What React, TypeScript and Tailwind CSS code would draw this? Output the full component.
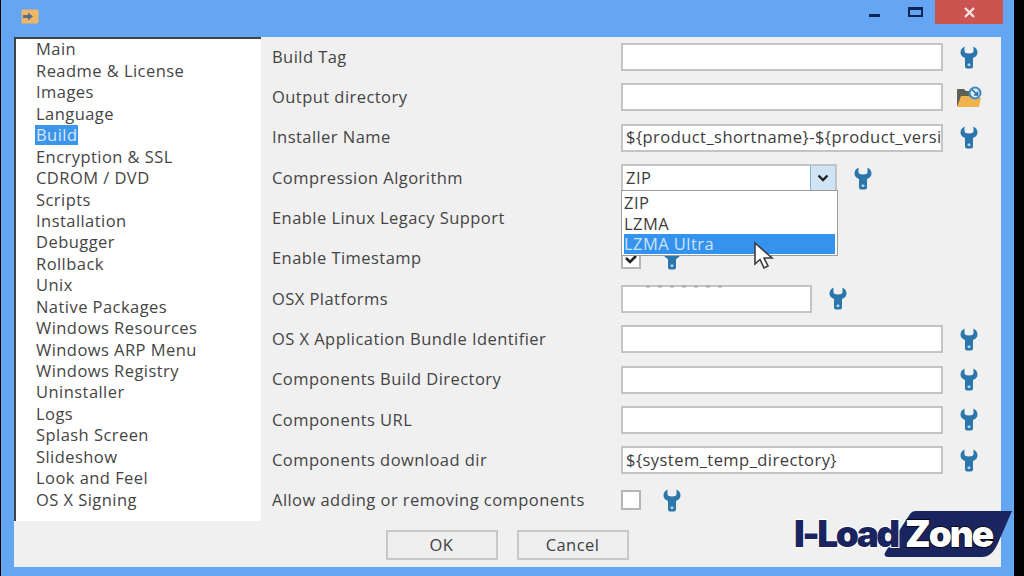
import type { ReactNode } from 'react';

const NAV_ITEMS = [
  'Main', 'Readme & License', 'Images', 'Language', 'Build', 'Encryption & SSL', 'CDROM / DVD', 'Scripts',
  'Installation', 'Debugger', 'Rollback', 'Unix', 'Native Packages', 'Windows Resources', 'Windows ARP Menu',
  'Windows Registry', 'Uninstaller', 'Logs', 'Splash Screen', 'Slideshow', 'Look and Feel', 'OS X Signing',
];

function Wrench() {
  return (
    <svg width="18" height="23" viewBox="0 0 18 23" className="shrink-0">
      <path
        d="M4.5 0.5 L4.5 5 Q4.5 7.5 9 7.5 Q13.5 7.5 13.5 5 L13.5 0.5 Q17.5 2.5 17.5 6.5 Q17.5 10 13 12 L13 20.5 Q13 22.5 11 22.5 L7 22.5 Q5 22.5 5 20.5 L5 12 Q0.5 10 0.5 6.5 Q0.5 2.5 4.5 0.5 Z"
        fill="#2b76ab"
      />
      <rect x="7.5" y="17.5" width="3" height="2.5" rx="1" fill="#b9d6ea" />
    </svg>
  );
}

function FolderIcon() {
  return (
    <svg width="27" height="22" viewBox="0 0 27 22" className="shrink-0">
      <path d="M1 4 Q1 3 2 3 L8 3 L10 5 L16 5 L16 10 L1 20 Z" fill="#5f5f58" />
      <path d="M1 21 L5 10 L13 10 L15 12 L25 12 L23 21 Z" fill="#f0b34e" />
      <circle cx="19" cy="7" r="6.5" fill="#3d8cc4" />
      <circle cx="19" cy="7" r="4.4" fill="#e6f0f8" />
      <path d="M16 3.5 L21 8.5 M21.5 5.5 L21.5 9 L18 9" fill="none" stroke="#2b6f9f" strokeWidth="1.6" />
    </svg>
  );
}

function TextBox({ value, width = 'w-[322px]' }: { value?: string; width?: string }) {
  return (
    <div className={`${width} h-[28px] shrink-0 bg-white border-2 border-[#c4c4c4] pl-[3px] flex items-center overflow-hidden whitespace-nowrap text-[#3c3c3c]`}>
      {value}
    </div>
  );
}

function Row({ label, children }: { label: string; children?: ReactNode }) {
  return (
    <div className="h-[40.3px] flex items-center">
      <div className="w-[349px] shrink-0 text-[#444444]">{label}</div>
      {children}
    </div>
  );
}

function CheckBox({ checked }: { checked?: boolean }) {
  return (
    <div className="w-[20px] h-[20px] shrink-0 bg-white border-2 border-[#b5b5b5] flex items-center justify-center">
      {checked && (
        <svg width="14" height="12" viewBox="0 0 14 12">
          <path d="M2 5 L6 9 L12 3" fill="none" stroke="#222222" strokeWidth="2.6" />
        </svg>
      )}
    </div>
  );
}

export default function App() {
  return (
    <div
      className="w-[1024px] h-[576px] overflow-hidden relative bg-black flex text-[16.5px] leading-none font-medium tracking-[0.45px]"
      style={{ fontFamily: '"Open Sans", "Noto Sans", sans-serif' }}
    >
      <div className="w-[1013px] h-full ml-[1px] bg-[#65a6f3] flex flex-col">
        {/* Title bar */}
        <div className="h-[37px] shrink-0 flex items-start pl-[20px]">
          <svg width="18" height="15" viewBox="0 0 18 15" className="mt-[9px]">
            <rect x="0.5" y="0.5" width="17" height="14" rx="1.5" fill="#efb765" />
            <path d="M2 6 L7 6 L7 3.5 L12 7.5 L7 11.5 L7 9 L2 9 Z" fill="#5a6f8f" />
          </svg>
          <div className="ml-auto flex items-start mr-[11px]">
            <div className="w-[11px] h-[3px] bg-[#10245a] mt-[14px] mr-[28px]" />
            <div className="w-[15px] h-[10px] border-2 border-t-[3px] border-[#10245a] mt-[7px] mr-[12px]" />
            <div className="w-[68px] h-[24px] bg-[#cc5450] flex items-center justify-center">
              <svg width="11" height="11" viewBox="0 0 11 11">
                <path d="M1 1 L10 10 M10 1 L1 10" stroke="#f6e4e2" strokeWidth="2.4" />
              </svg>
            </div>
          </div>
        </div>

        {/* Client area */}
        <div className="h-[530px] w-[987px] ml-[13px] shrink-0 bg-[#f0f0f0] flex flex-col">
          <div className="flex h-[484px] shrink-0">
            <div className="w-[247px] shrink-0 bg-white border-l-2 border-t-2 border-[#3f4347] pl-[20px]">
              {NAV_ITEMS.map(item => (
                <div key={item} className="h-[21.45px] flex items-center text-[#454545]">
                  <span className={item === 'Build' ? 'bg-[#3d95ea] text-[#d6e8fa] px-[1px] ml-[-1px] h-[20px] flex items-center' : ''}>
                    {item}
                  </span>
                </div>
              ))}
            </div>
            <div className="flex-1 pl-[11px] min-w-0">
              <Row label="Build Tag">
                <TextBox />
                <div className="ml-[17px]"><Wrench /></div>
              </Row>
              <Row label="Output directory">
                <TextBox />
                <div className="ml-[13px]"><FolderIcon /></div>
              </Row>
              <Row label="Installer Name">
                <TextBox value="${product_shortname}-${product_version}" />
                <div className="ml-[17px]"><Wrench /></div>
              </Row>
              <Row label="Compression Algorithm">
                <div className="w-[216px] h-[28px] shrink-0 bg-white border-2 border-[#c4c4c4] pl-[3px] flex items-center text-[#3c3c3c]">
                  ZIP
                  <div className="ml-auto w-[25px] h-[24px] bg-[#cfe5f6] border-l border-[#7fb4de] flex items-center justify-center">
                    <svg width="12" height="8" viewBox="0 0 12 8">
                      <path d="M1.5 1.5 L6 6 L10.5 1.5" fill="none" stroke="#222222" strokeWidth="2.4" />
                    </svg>
                  </div>
                </div>
                <div className="ml-[17px]"><Wrench /></div>
              </Row>
              <Row label="Enable Linux Legacy Support" />
              <Row label="Enable Timestamp">
                <CheckBox checked />
                <div className="ml-[22px]"><Wrench /></div>
              </Row>
              <Row label="OSX Platforms">
                <TextBox width="w-[191px]" />
                <div className="ml-[17px]"><Wrench /></div>
              </Row>
              <Row label="OS X Application Bundle Identifier">
                <TextBox />
                <div className="ml-[17px]"><Wrench /></div>
              </Row>
              <Row label="Components Build Directory">
                <TextBox />
                <div className="ml-[17px]"><Wrench /></div>
              </Row>
              <Row label="Components URL">
                <TextBox />
                <div className="ml-[17px]"><Wrench /></div>
              </Row>
              <Row label="Components download dir">
                <TextBox value="${system_temp_directory}" />
                <div className="ml-[17px]"><Wrench /></div>
              </Row>
              <Row label="Allow adding or removing components">
                <CheckBox />
                <div className="ml-[22px]"><Wrench /></div>
              </Row>
            </div>
          </div>
          <div className="flex justify-center gap-[19px] pt-[9px] ml-[-1px] text-[#3f3f3f]">
            <div className="w-[112px] h-[30px] bg-[#efefef] border-2 border-[#c8c8c8] flex items-center justify-center">OK</div>
            <div className="w-[112px] h-[30px] bg-[#efefef] border-2 border-[#c8c8c8] flex items-center justify-center">Cancel</div>
          </div>
        </div>
      </div>

      {/* Open combo list */}
      <div className="absolute left-[621px] top-[190px] w-[217px] h-[66px] bg-white border border-[#9d9d9d] px-[2px] pt-[2px] text-[#3c3c3c]">
        <div className="h-[20.5px] flex items-center">ZIP</div>
        <div className="h-[20.5px] flex items-center">LZMA</div>
        <div className="h-[20px] flex items-center bg-[#3393ee] text-[#cfe4f9]">LZMA Ultra</div>
      </div>

      {/* Leftover specks above the OSX Platforms field */}
      <svg width="80" height="3" viewBox="0 0 80 3" className="absolute left-[646px] top-[285px]">
        <path d="M0 1.5 H78" stroke="#a9a9a9" strokeWidth="2" strokeDasharray="4 8" />
      </svg>

      {/* Mouse pointer */}
      <svg width="24" height="30" viewBox="0 0 24 30" className="absolute left-[752px] top-[241px]">
        <path d="M3 2 L3 23 L8 18.5 L12 27 L16 25 L12 17 L20 17 Z" fill="#ffffff" stroke="#3c3c3c" strokeWidth="1.6" />
      </svg>

      {/* Watermark */}
      <div className="absolute left-[794px] top-[511px] w-[220px] h-[47px] tracking-normal">
        <svg width="220" height="47" viewBox="0 0 220 47" className="absolute left-0 top-0">
          <path d="M92 40 L116 3 Q118 0 122 0 L218 0 L204 32 Q198 46 188 46 L95 46 Q88 46 92 40 Z" fill="#1a2560" />
        </svg>
        <span
          className="absolute left-0 top-[4px] text-[37px] leading-none font-black text-[#1a2560] tracking-[-2.5px]"
          style={{ fontFamily: 'Inter, sans-serif', WebkitTextStroke: '2px #ffffff', paintOrder: 'stroke fill' }}
        >
          I-Load
        </span>
        <span
          className="absolute left-[111px] top-[4px] text-[37px] leading-none font-black text-white tracking-[-2px]"
          style={{ fontFamily: 'Inter, sans-serif', WebkitTextStroke: '1.5px #000000', paintOrder: 'stroke fill' }}
        >
          Zone
        </span>
      </div>
    </div>
  );
}
